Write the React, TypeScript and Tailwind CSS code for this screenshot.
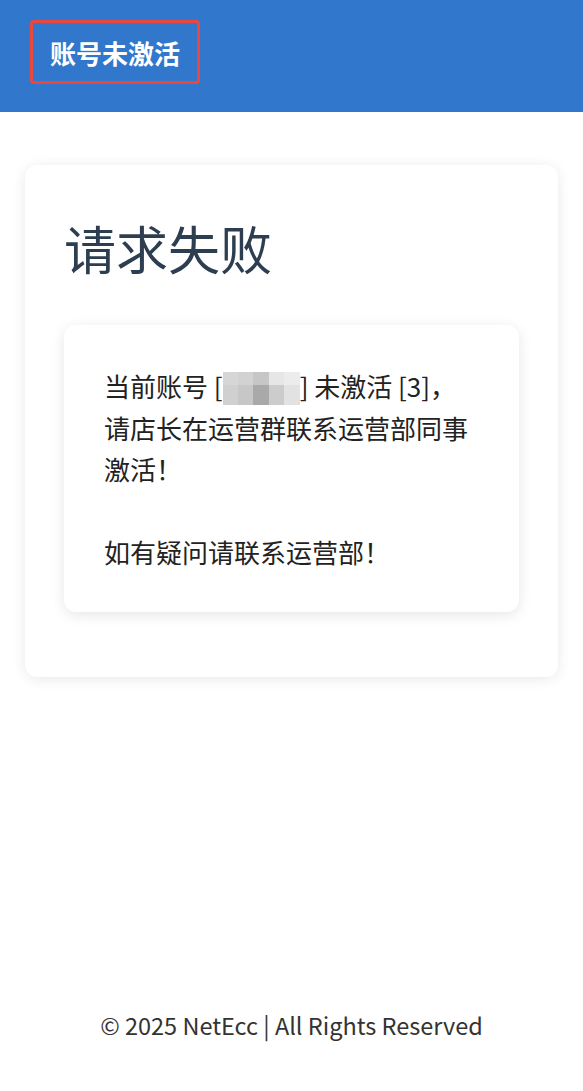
const font = "font-['Noto_Sans_CJK_SC','Noto_Sans',sans-serif]";

// 打码的账号：两行灰色马赛克块
const mosaico = [
  ["#d6d6d6", "#d2d2d2", "#c6c6c6", "#e6e6e6", "#ececec"],
  ["#d0d0d0", "#c7c7c7", "#a9a9a9", "#cccccc", "#e2e2e2"],
];

function Mosaico() {
  return (
    <span className="inline-block h-[33px] w-[77px] align-[-8px]">
      {mosaico.map((fila, i) => (
        <span key={i} className={`flex ${i === 0 ? "h-[13px]" : "h-[20px]"}`}>
          {fila.map((c, j) => (
            <span key={j} className="block h-full flex-1" style={{ backgroundColor: c }} />
          ))}
        </span>
      ))}
    </span>
  );
}

export default function App() {
  return (
    <div className={`flex min-h-[1091px] flex-col bg-white ${font}`}>
      <header className="flex h-[112px] items-start bg-[#3178cc] px-[30px] pt-[20px]">
        <h1 className="flex h-[64px] items-center rounded-[4px] border-[3px] border-[#e8483f] px-[17px] text-[26px] font-bold text-white">
          账号未激活
        </h1>
      </header>

      <main className="flex-1 px-[25px] pt-[53px]">
        <div className="rounded-[12px] bg-white px-[39px] pb-[65px] pt-[52px] shadow-[0_2px_14px_rgba(0,0,0,0.09)]">
          <h2 className="text-[52px] leading-[62px] text-[#2c3e50]">请求失败</h2>
          <div className="mt-[46px] rounded-[12px] bg-white pb-[39px] pl-[40px] pr-[34px] pt-[40px] text-[26px] leading-[41.5px] text-[#222] shadow-[0_3px_14px_rgba(0,0,0,0.1)]">
            <p>
              当前账号 [<Mosaico />] 未激活 [3]，
              <br />
              请店长在运营群联系运营部同事激活！
            </p>
            <p className="mt-[41.5px]">如有疑问请联系运营部！</p>
          </div>
        </div>
      </main>

      <footer className="pb-[48px] text-center text-[23.5px] text-[#333]">
        © 2025 NetEcc | All Rights Reserved
      </footer>
    </div>
  );
}
